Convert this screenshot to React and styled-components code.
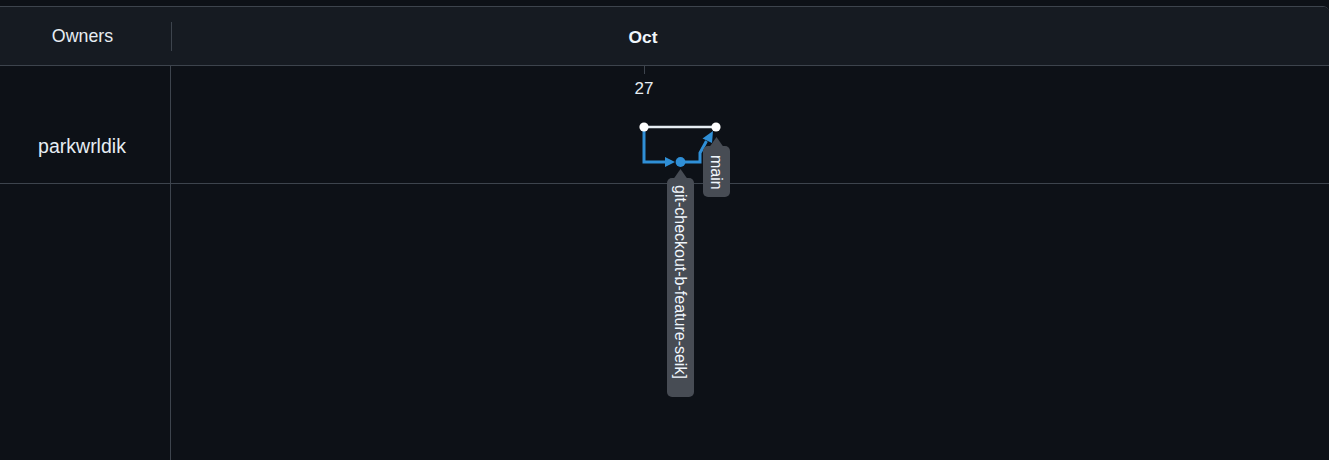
import React from "react";
import styled, { createGlobalStyle } from "styled-components";

const Global = createGlobalStyle`
  html, body { margin: 0; padding: 0; background: #0d1117; }
  body { font-family: "Liberation Sans", Arial, sans-serif; color: #e6edf3; overflow: hidden; }
`;

const LINE = "#3d444d";
const BLUE = "#2f8fd6";
const LABEL = "#474c54";

const Frame = styled.div`
  margin-top: 6px;
  border-top: 1px solid ${LINE};
  border-top-right-radius: 6px;
  width: 1329px;
  height: 453px;
  overflow: hidden;
`;

const Header = styled.div`
  display: grid;
  grid-template-columns: 171px 1fr;
  height: 58px;
  background: #161b22;
  border-bottom: 1px solid ${LINE};
  border-top-right-radius: 6px;
`;

const HeadOwner = styled.div`
  display: flex;
  align-items: center;
  justify-content: center;
  padding-right: 6px;
  padding-top: 1px;
  font-size: 17.8px;
  color: #e6edf3;
  position: relative;
  &::after {
    content: "";
    position: absolute;
    right: -1px;
    top: 15px;
    height: 29px;
    width: 1px;
    background: ${LINE};
  }
`;

const HeadTimeline = styled.div`
  position: relative;
`;

const MonthLabel = styled.span`
  position: absolute;
  left: ${(p) => p.$x}px;
  top: 51.5%;
  transform: translate(-50%, -50%);
  font-weight: 700;
  font-size: 17.4px;
  color: #f0f6fc;
`;

const Body = styled.div`
  position: relative;
`;

const Row = styled.div`
  display: grid;
  grid-template-columns: 171px 1fr;
  height: ${(p) => p.$h}px;
  border-bottom: ${(p) => (p.$last ? "none" : `1px solid ${LINE}`)};
`;

const OwnerCell = styled.div`
  display: flex;
  align-items: center;
  justify-content: center;
  padding-right: 6px;
  padding-top: 44px;
  box-sizing: border-box;
  font-size: 19.5px;
  color: #e6edf3;
  border-right: 1px solid ${LINE};
`;

const TimeCell = styled.div``;

const Overlay = styled.svg`
  position: absolute;
  left: 0;
  top: 0;
  width: 1329px;
  height: 394px;
  pointer-events: none;
  overflow: visible;
`;

function BranchLabel({ x, tipY, top, bottom, text, textStart }) {
  const w = 27;
  return (
    <g>
      <polygon points={`${x},${tipY} ${x - 7},${top + 1} ${x + 7},${top + 1}`} fill={LABEL} />
      <rect x={x - w / 2} y={top} width={w} height={bottom - top} rx={5} fill={LABEL} />
      <text
        transform={`translate(${x}, ${textStart}) rotate(90)`}
        dominantBaseline="central"
        fontSize="16"
        fill="#f0f6fc"
        fontFamily='"Liberation Sans", Arial, sans-serif'
      >
        {text}
      </text>
    </g>
  );
}

export default function App() {
  return (
    <>
      <Global />
      <Frame>
        <Header>
          <HeadOwner>Owners</HeadOwner>
          <HeadTimeline>
            <MonthLabel $x={472}>Oct</MonthLabel>
          </HeadTimeline>
        </Header>
        <Body>
          <Row $h={117}>
            <OwnerCell>parkwrldik</OwnerCell>
            <TimeCell />
          </Row>
          <Row $h={277} $last>
            <OwnerCell />
            <TimeCell />
          </Row>
          <Overlay>
            <g transform="translate(0,-66)">
              <line x1="644.5" y1="66" x2="644.5" y2="74" stroke={LINE} strokeWidth="1" />
              <text x="644" y="93.5" textAnchor="middle" fontSize="17" fill="#e6edf3" fontFamily='"Liberation Sans", Arial, sans-serif'>
                27
              </text>
              <path d="M644 127 V162 H667" stroke={BLUE} strokeWidth="3" fill="none" />
              <polygon points="665,157 675,162 665,167" fill={BLUE} />
              <path d="M680 162 H700 V153 L706.5 141" stroke={BLUE} strokeWidth="3" fill="none" />
              <polygon points="713,131 712,143 702.5,138.5" fill={BLUE} />
              <line x1="644" y1="127" x2="716" y2="127" stroke="#e6edf3" strokeWidth="2.5" />
              <circle cx="644" cy="127" r="4.6" fill="#ffffff" />
              <circle cx="716" cy="127" r="4.6" fill="#ffffff" />
              <circle cx="680.5" cy="162" r="4.9" fill={BLUE} />
              <BranchLabel x={716.5} tipY={137} top={146} bottom={197} text="main" textStart={155} />
              <BranchLabel x={680.5} tipY={169} top={178} bottom={397} text="git-checkout-b-feature-seik]" textStart={185} />
            </g>
          </Overlay>
        </Body>
      </Frame>
    </>
  );
}
